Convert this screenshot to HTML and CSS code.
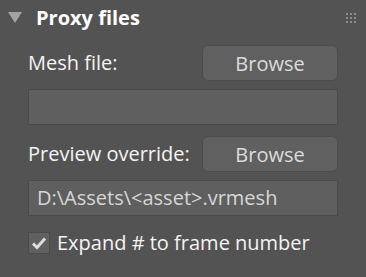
FILE: index.html
```html
<!DOCTYPE html>
<html lang="en">
<head>
  <meta charset="UTF-8" />
  <meta name="viewport" content="width=device-width, initial-scale=1" />
  <title>Proxy files</title>
  <link rel="stylesheet" href="styles.css">
</head>
<body>
  <div class="panel">
    <div class="header">
      <svg class="arrow" width="14" height="11" viewBox="0 0 14 11"><polygon points="0,0 14,0 7,11" fill="#a3a3a3"/></svg>
      <h1>Proxy files</h1>
      <svg class="grip" width="10" height="10" viewBox="0 0 10 10">
        <rect x="0" y="0" width="2" height="2"/><rect x="4" y="0" width="2" height="2"/><rect x="8" y="0" width="2" height="2"/>
        <rect x="0" y="4" width="2" height="2"/><rect x="4" y="4" width="2" height="2"/><rect x="8" y="4" width="2" height="2"/>
        <rect x="0" y="8" width="2" height="2"/><rect x="4" y="8" width="2" height="2"/><rect x="8" y="8" width="2" height="2"/>
      </svg>
    </div>

    <div class="content">
      <div class="row">
        <label>Mesh file:</label>
        <button type="button">Browse</button>
      </div>
      <div class="field"></div>

      <div class="row gap">
        <label>Preview override:</label>
        <button type="button">Browse</button>
      </div>
      <div class="field">D:\Assets\&lt;asset&gt;.vrmesh</div>

      <label class="check">
        <span class="box">
          <svg width="16" height="14" viewBox="0 0 16 14"><path d="M2 7.5 L6 11.5 L14 2.5" fill="none" stroke="#dcdcdc" stroke-width="3"/></svg>
        </span>
        Expand # to frame number
      </label>
    </div>
  </div>
</body>
</html>
```

FILE: styles.css
```css
* {
  box-sizing: border-box;
}
body {
  margin: 0;
  background: #535353;
  font-family: "Open Sans", "Noto Sans", sans-serif;
  color: #f4f4f4;
}
.panel {
  width: 366px;
  height: 277px;
}

.header {
  height: 36px;
  display: flex;
  align-items: center;
  padding: 0 10px 0 8px;
}
.arrow {
  margin-top: -1px;
}
h1 {
  margin: 0 0 0 14px;
  font-size: 20px;
  font-weight: 700;
  color: #fff;
  flex: 1;
  line-height: 1;
}
.grip {
  fill: #8c8c8c;
  margin-top: -1px;
}

.content {
  padding: 9px 28px 0;
}
.row {
  display: grid;
  grid-template-columns: 1fr 136px;
  align-items: center;
  height: 36px;
}
.row.gap {
  margin-top: 11px;
}
label {
  font-size: 20px;
  line-height: 1;
}
button {
  height: 36px;
  border: 1px solid #4c4c4c;
  border-radius: 6px;
  background: #606060;
  color: #dcdcdc;
  font-family: inherit;
  font-size: 20px;
  padding: 0;
}
.field {
  margin-top: 8px;
  height: 36px;
  border: 1px solid #4a4a4a;
  background: #5f5f5f;
  color: #d6d6d6;
  font-size: 20px;
  line-height: 33px;
  padding-left: 8px;
}

.check {
  display: flex;
  align-items: center;
  margin-top: 16px;
  gap: 7px;
}
.box {
  width: 22px;
  height: 22px;
  border: 1px solid #4a4a4a;
  background: #606060;
  display: flex;
  align-items: center;
  justify-content: center;
}
```
